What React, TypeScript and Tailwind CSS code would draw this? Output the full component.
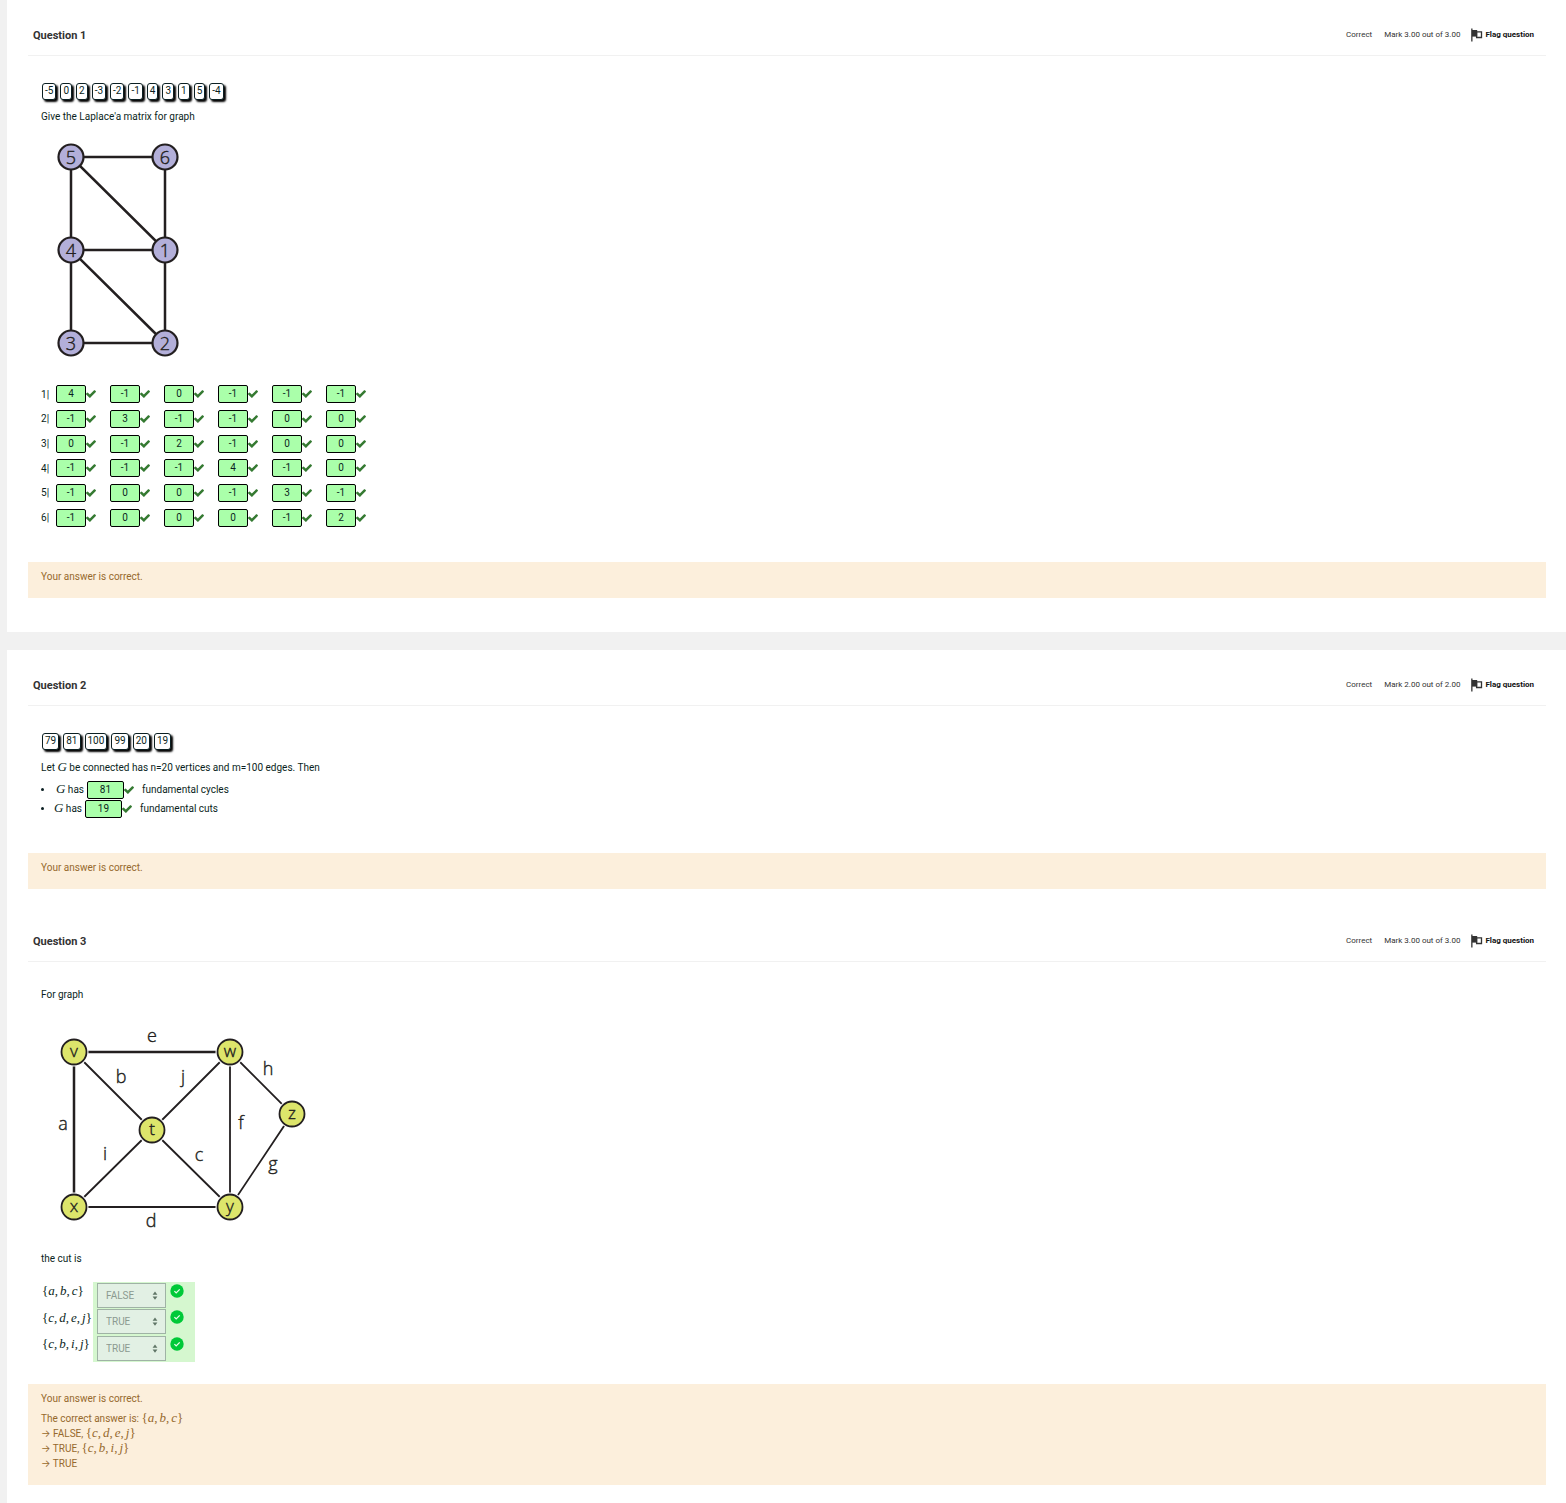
import React from "react";

type NodeDef = { label: string; x: number; y: number };
type LabelDef = { text: string; x: number; y: number };

const FlagIcon = () => (
  <svg width="12" height="14" viewBox="0 0 12 14" aria-hidden="true">
    <path d="M5.6 3.9h4.9v5.6H5.6z" fill="#fff" stroke="#333" strokeWidth="1.3" />
    <path d="M0.2 0.5h1.3v13H0.2z" fill="#333" />
    <path d="M1 2h5.2v6.6H1z" fill="#333" />
  </svg>
);

const Check = () => (
  <svg className="shrink-0" width="10" height="10" viewBox="121 155 1550 1550" fill="#357a32" role="img" aria-label="Correct">
    <path d="M1671 566q0 40-28 68l-724 724-136 136q-28 28-68 28t-68-28l-136-136-362-362q-28-28-28-68t28-68l136-136q28-28 68-28t68 28l294 295 656-657q28-28 68-28t68 28l136 136q28 28 28 68z" />
  </svg>
);

const CircleCheck = () => (
  <svg className="mt-px" width="14" height="14" viewBox="0 0 14 14" role="img" aria-label="Correct">
    <circle cx="7" cy="7" r="6.7" fill="#00c938" />
    <path d="M4.4 7.1l1.8 1.8 3.5-3.5" fill="none" stroke="#e6fbe9" strokeWidth="1.3" />
  </svg>
);

const Chips = ({ values }: { values: string[] }) => (
  <div className="flex gap-1 pl-px">
    {values.map((v) => (
      <span
        key={v}
        className="h-[17px] rounded-[3px] border border-[#0b1f22] bg-white px-[2px] text-[10px] leading-[14px] shadow-[2px_2px_2px_0px_#000000]"
      >
        {v}
      </span>
    ))}
  </div>
);

const Drop = ({ value, wide = false }: { value: string; wide?: boolean }) => (
  <span className="inline-flex items-center">
    <span
      className={
        (wide ? "w-[37px]" : "w-[30px]") +
        " h-[18px] rounded-[2px] border border-black bg-[#aaffaa] text-center text-[10px] leading-[15px]"
      }
    >
      {value}
    </span>
    <Check />
  </span>
);

const M = ({ children }: { children: React.ReactNode }) => (
  <i className="font-['Liberation_Serif',serif] text-[13px] leading-none">{children}</i>
);

const Arrow = () => <span className="font-['Inter',sans-serif] leading-none">→</span>;

const MathSet = ({ items }: { items: string[] }) => (
  <span className="whitespace-nowrap font-['Liberation_Serif',serif] text-[13px] leading-none">
    {"{"}
    {items.map((v, i) => (
      <React.Fragment key={v}>
        <i>{v}</i>
        {i < items.length - 1 && <span className="mr-0.5">,</span>}
      </React.Fragment>
    ))}
    {"}"}
  </span>
);

const Feedback = ({ children }: { children: React.ReactNode }) => (
  <div className="bg-[#fcefdc] px-[13px] pt-[7px] leading-[15px] text-[#96692d]">{children}</div>
);

const Question = ({ n, mark, children }: { n: number; mark: string; children: React.ReactNode }) => (
  <article>
    <header className="flex h-14 items-center justify-between border-b border-[#f1f1f1] pt-[14px] pr-3 pl-[5px]">
      <h2 className="pt-0.5 text-[11px] font-bold text-[#333]">Question {n}</h2>
      <div className="flex items-center text-[8px] text-[#333]">
        <span className="mr-3">Correct</span>
        <span className="mr-[11px]">Mark {mark} out of {mark}</span>
        <button type="button" className="flex items-center gap-0.5 text-[8px] font-bold text-[#111]">
          <FlagIcon />
          Flag question
        </button>
      </div>
    </header>
    {children}
  </article>
);

const lapNodes: NodeDef[] = [
  { label: "5", x: 30, y: 27 },
  { label: "6", x: 124, y: 27 },
  { label: "4", x: 30, y: 120 },
  { label: "1", x: 124, y: 120 },
  { label: "3", x: 30, y: 213 },
  { label: "2", x: 124, y: 213 },
];

const LaplaceGraph = () => (
  <svg width="160" height="240" viewBox="0 0 160 240" role="img" aria-label="Graph with six vertices">
    <path
      d="M30 27H124V213H30V27L124 120H30L124 213"
      fill="none"
      stroke="#231f20"
      strokeWidth="2.5"
    />
    {lapNodes.map((n) => (
      <g key={n.label}>
        <circle cx={n.x} cy={n.y} r="12.5" fill="#b3afd9" stroke="#231f20" strokeWidth="2.2" />
        <text x={n.x} y={n.y + 7} textAnchor="middle" className="font-['Open_Sans',sans-serif] text-[18px] font-light" fill="#231f20" stroke="#231f20" strokeWidth="0.4">
          {n.label}
        </text>
      </g>
    ))}
  </svg>
);

const cutNodes: NodeDef[] = [
  { label: "v", x: 33, y: 31 },
  { label: "w", x: 189, y: 31 },
  { label: "z", x: 251, y: 93 },
  { label: "t", x: 111, y: 109 },
  { label: "x", x: 33, y: 186 },
  { label: "y", x: 189, y: 186 },
];

const cutLabels: LabelDef[] = [
  { text: "e", x: 111, y: 21 },
  { text: "b", x: 80, y: 62 },
  { text: "j", x: 142, y: 62 },
  { text: "h", x: 227, y: 54 },
  { text: "a", x: 22, y: 109 },
  { text: "f", x: 200, y: 108 },
  { text: "i", x: 64, y: 139 },
  { text: "c", x: 158, y: 140 },
  { text: "g", x: 232, y: 149 },
  { text: "d", x: 110, y: 206 },
];

const CutGraph = () => (
  <svg width="280" height="220" viewBox="0 0 280 220" role="img" aria-label="Graph with labelled edges">
    <g fill="none" stroke="#231f20">
      <path d="M33 31H189M33 31V186" strokeWidth="2.5" />
      <path d="M33 186H189M189 31V186M33 31L111 109L189 186M189 31L111 109L33 186M189 31L251 93L189 186" strokeWidth="1.8" />
    </g>
    {cutNodes.map((n) => (
      <g key={n.label}>
        <circle cx={n.x} cy={n.y} r="14.5" fill="#fff" />
        <circle cx={n.x} cy={n.y} r="12.5" fill="#dde56b" stroke="#231f20" strokeWidth="1.8" />
        <text x={n.x} y={n.y + 5} textAnchor="middle" className="font-['Open_Sans',sans-serif] text-[17px] font-light" fill="#231f20" stroke="#231f20" strokeWidth="0.4">
          {n.label}
        </text>
      </g>
    ))}
    {cutLabels.map((l) => (
      <text key={l.text} x={l.x} y={l.y} textAnchor="middle" className="font-['Open_Sans',sans-serif] text-[18px] font-light" fill="#231f20" stroke="#231f20" strokeWidth="0.4">
        {l.text}
      </text>
    ))}
  </svg>
);

const matrix = [
  ["4", "-1", "0", "-1", "-1", "-1"],
  ["-1", "3", "-1", "-1", "0", "0"],
  ["0", "-1", "2", "-1", "0", "0"],
  ["-1", "-1", "-1", "4", "-1", "0"],
  ["-1", "0", "0", "-1", "3", "-1"],
  ["-1", "0", "0", "0", "-1", "2"],
];

const cuts = [
  { items: ["a", "b", "c"], answer: "FALSE" },
  { items: ["c", "d", "e", "j"], answer: "TRUE" },
  { items: ["c", "b", "i", "j"], answer: "TRUE" },
];

export default function App() {
  return (
    <main className="flex min-h-screen flex-col gap-[18px] bg-[#f1f1f1] pl-[7px] font-['Roboto',sans-serif] text-[10px] leading-[15px] text-[#0b1f22]">
      <section className="bg-white pr-5 pb-[34px] pl-[21px]">
        <Question n={1} mark="3.00">
          <div className="px-[13px] pt-[27px] pb-8">
            <Chips values={["-5", "0", "2", "-3", "-2", "-1", "4", "3", "1", "5", "-4"]} />
            <p className="mt-[9px] mb-[6px]">Give the Laplace'a matrix for graph</p>
            <LaplaceGraph />
            <table className="mt-3 h-[148px] table-fixed border-collapse">
              <tbody>
                {matrix.map((row, r) => (
                  <tr key={r}>
                    <th scope="row" className="w-[15px] p-0 text-left font-normal">{r + 1}|</th>
                    {row.map((v, c) => (
                      <td key={c} className="w-[54px] p-0 align-middle">
                        <span className="flex">
                          <Drop value={v} />
                        </span>
                      </td>
                    ))}
                  </tr>
                ))}
              </tbody>
            </table>
          </div>
          <Feedback>
            <p className="pb-[14px]">Your answer is correct.</p>
          </Feedback>
        </Question>
      </section>

      <section className="flex grow flex-col gap-[17px] bg-white pr-5 pb-[18px] pl-[21px]">
        <Question n={2} mark="2.00">
          <div className="px-[13px] pt-[27px] pb-[35px]">
            <Chips values={["79", "81", "100", "99", "20", "19"]} />
            <p className="mt-[10px] mb-[5px]">
              Let <M>G</M> be connected has n=20 vertices and m=100 edges. Then
            </p>
            <ul>
              <li className="flex h-[19px] items-center">
                <span className="mr-3 size-[3px] rounded-full bg-[#0b1f22]" />
                <span className="mr-[3px]"><M>G</M> has</span>
                <Drop value="81" wide />
                <span className="ml-2">fundamental cycles</span>
              </li>
              <li className="flex h-[19px] items-center">
                <span className="mr-[10px] size-[3px] rounded-full bg-[#0b1f22]" />
                <span className="mr-[3px]"><M>G</M> has</span>
                <Drop value="19" wide />
                <span className="ml-2">fundamental cuts</span>
              </li>
            </ul>
          </div>
          <Feedback>
            <p className="pb-[14px]">Your answer is correct.</p>
          </Feedback>
        </Question>

        <Question n={3} mark="3.00">
          <div className="px-[13px] pt-[25px] pb-[22px]">
            <p className="mb-[19px]">For graph</p>
            <CutGraph />
            <p className="mt-[10px] mb-4">the cut is</p>
            <table className="h-20 border-collapse">
              <tbody>
                {cuts.map((cut, i) => (
                  <tr key={i}>
                    <th scope="row" className="w-[52px] p-0 pt-0.5 pl-px text-left align-top font-normal">
                      <label htmlFor={"cut-" + i}>
                        <MathSet items={cut.items} />
                      </label>
                    </th>
                    <td className="w-[102px] bg-[#d5f7cf] p-0 pl-1">
                      <span className="flex items-start gap-1">
                        <span className="relative">
                          <select
                            id={"cut-" + i}
                            disabled
                            defaultValue={cut.answer}
                            className="block h-[25px] w-[69px] appearance-none border border-[#9fb3a5] bg-[#e2f0e4] pl-2 text-[10px] text-[#8b9a90] opacity-100"
                          >
                            <option>FALSE</option>
                            <option>TRUE</option>
                          </select>
                          <svg className="pointer-events-none absolute top-2 right-2" width="6" height="9" viewBox="0 0 6 9" fill="#5f7566">
                            <path d="M3 0.6L5.4 3.8H0.6zM3 8.8L0.6 5.6H5.4z" />
                          </svg>
                        </span>
                        <CircleCheck />
                      </span>
                    </td>
                  </tr>
                ))}
              </tbody>
            </table>
          </div>
          <Feedback>
            <p className="mb-[5px]">Your answer is correct.</p>
            <p className="pb-[14px]">
              The correct answer is: <MathSet items={["a", "b", "c"]} />
              <br /><Arrow /> FALSE, <MathSet items={["c", "d", "e", "j"]} />
              <br /><Arrow /> TRUE, <MathSet items={["c", "b", "i", "j"]} />
              <br /><Arrow /> TRUE
            </p>
          </Feedback>
        </Question>
      </section>
    </main>
  );
}
